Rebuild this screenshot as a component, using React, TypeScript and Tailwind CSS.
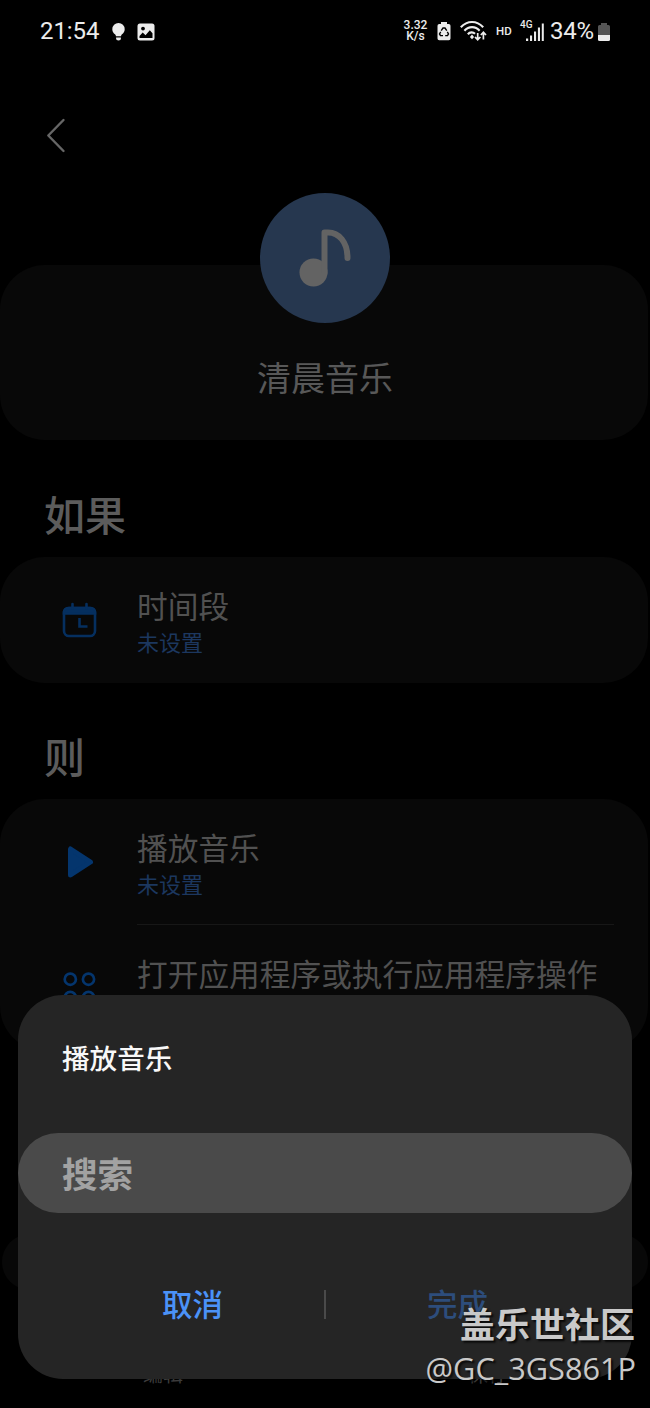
import type { ReactNode } from "react";

function StatusBar() {
  return (
    <div className="flex h-[62px] items-center justify-between pl-10 pr-[39px] font-['Roboto',sans-serif] text-[#ececec]">
      <div className="flex items-center">
        <span className="w-[60px] whitespace-nowrap text-[24px] leading-none tracking-[-0.1px]">21:54</span>
        <svg className="ml-3 mt-px h-[18px] w-[13px]" viewBox="0 0 13 18" fill="currentColor">
          <path d="M6.5 0A6.2 6.2 0 0 0 .3 6.2c0 2.4 1.3 3.9 2.7 5.1.6.6.8 1 .9 1.9h5.2c.1-.9.3-1.3.9-1.9 1.4-1.2 2.7-2.7 2.7-5.1A6.2 6.2 0 0 0 6.5 0z" />
          <path d="M4.1 14.4h4.8v1.2c0 1-1 2-2.4 2s-2.4-1-2.4-2z" />
        </svg>
        <svg className="ml-3 mt-px h-[18px] w-[18px]" viewBox="0 0 18 18">
          <rect x="0.5" y="0.5" width="17" height="17" rx="2.5" fill="currentColor" />
          <circle cx="6" cy="5.6" r="1.9" fill="#000" />
          <path d="M2.5 15v-2l3.2-3.4 2.8 2.6 4.3-5 2.7 3V15z" fill="#000" />
        </svg>
      </div>

      <div className="flex items-center">
        <div className="flex w-[25px] flex-col items-center text-[12px] font-medium leading-[11px]">
          <span>3.32</span>
          <span>K/s</span>
        </div>
        <svg className="ml-[9px] h-[20px] w-[14px]" viewBox="0 0 14 20">
          <path d="M4 1h6v2h1.7a1.8 1.8 0 0 1 1.8 1.8v12.7a1.8 1.8 0 0 1-1.8 1.8H2.3a1.8 1.8 0 0 1-1.8-1.8V4.8A1.8 1.8 0 0 1 2.3 3H4z" fill="currentColor" />
          <g fill="none" stroke="#000" strokeWidth="1.4">
            <path d="M4.2 9.6 6 7h2l1.8 2.6" />
            <path d="m10.3 10.8 1.2 2.1-1 1.7H8.2" />
            <path d="M6 14.6H3.500l-1-1.700 1.200-2.100" />
          </g>
        </svg>
        <svg className="ml-[9px] h-[22px] w-[27px]" viewBox="0 0 27 22" fill="none" stroke="currentColor" strokeWidth="2.1">
          <path d="M.8 7.2c6.4-7 16-7 22.4 0" />
          <path d="M4.4 10.8c4.4-4.9 11-4.9 15.2 0" />
          <path d="M7.8 14.2c2.2-2.4 5.2-2.4 7.2-.4" />
          <path d="m12 14.600 2.100 2.300-2.100 2.300-2.100-2.300z" fill="currentColor" stroke="none" />
          <path d="M17.7 13v6.500M15 17l2.700 2.700 2.700-2.700M23.400 19.500v-7M20.800 15l2.600-2.700L26 15" strokeWidth="1.7" />
        </svg>
        <span className="ml-[9px] mt-px w-[17px] text-[11.5px] font-medium leading-none">HD</span>
        <div className="relative ml-[7px] h-[22px] w-[25px]">
          <span className="absolute left-0 top-0 text-[10px] font-medium leading-[10px]">4G</span>
          <svg className="h-[22px] w-[25px]" viewBox="0 0 25 22" fill="currentColor">
            <path d="M6 18.500h2.200V21H6zM10 15.500h2.100V21H10zM14 11.500h2.100V21H14zM17.900 7.500H20V21h-2.100zM21.800 3.500h2V21h-2z" />
          </svg>
        </div>
        <span className="ml-[5px] w-[44px] whitespace-nowrap text-[24px] leading-none tracking-[-0.3px]">34%</span>
        <svg className="ml-[3px] mt-px h-[20px] w-[14px]" viewBox="0 0 14 20">
          <path d="M4 1h6v2h1.5A1.5 1.5 0 0 1 13 4.5V14H1V4.5A1.5 1.5 0 0 1 2.5 3H4z" fill="#555" />
          <path d="M1 13h12v4.5a1.5 1.5 0 0 1-1.5 1.5h-9A1.5 1.5 0 0 1 1 17.5z" fill="currentColor" />
        </svg>
      </div>
    </div>
  );
}

function CalendarIcon() {
  return (
    <svg className="h-[36px] w-[36px]" viewBox="0 0 36 36" fill="none" stroke="#052f5f" strokeWidth="2.6">
      <rect x="3" y="6" width="31" height="28" rx="5" />
      <path d="M3 11.5V10a4 4 0 0 1 4-4h23a4 4 0 0 1 4 4v1.5z" fill="#052f5f" />
      <path d="M11.5 2v4M25.5 2v4" strokeLinecap="round" />
      <path d="M18.5 16v8.500h8" />
    </svg>
  );
}

function PlayIcon() {
  return (
    <svg className="h-[36px] w-[36px]" viewBox="0 0 36 36">
      <path d="M9.5 5v26L29.5 18z" fill="#04356d" stroke="#04356d" strokeWidth="5" strokeLinejoin="round" />
    </svg>
  );
}

function AppsIcon() {
  return (
    <svg className="h-[36px] w-[36px]" viewBox="0 0 36 36" fill="none" stroke="#04356d" strokeWidth="2.7">
      <circle cx="9.3" cy="9.2" r="5.6" />
      <circle cx="27.5" cy="9.2" r="5.6" />
      <circle cx="9.3" cy="27.4" r="5.6" />
      <circle cx="27.5" cy="27.4" r="5.6" />
    </svg>
  );
}

function Row({ icon, title, subtitle }: { icon: ReactNode; title: string; subtitle?: string }) {
  return (
    <div className="flex h-[126px] pl-[61px]">
      <div className="w-[76px] pt-[45px]">{icon}</div>
      <div className="pt-[29px]">
        <p className="whitespace-nowrap text-[30.7px] leading-[38px] text-[#515151]">{title}</p>
        {subtitle && <p className="-mt-px text-[22px] leading-[36px] text-[#1c375f]">{subtitle}</p>}
      </div>
    </div>
  );
}

function Dialog() {
  return (
    <div className="absolute left-[18px] top-[995px] h-[384px] w-[614px] rounded-[45px] bg-[#252525]">
      <h2 className="pl-11 pt-[42px] text-[27.6px] font-medium leading-[40px] text-[#f8f8f8]">播放音乐</h2>
      <div className="mt-[56px] flex h-[80px] items-center rounded-[40px] bg-[#4a4a4a] pb-px pl-11">
        <span className="text-[35.6px] font-bold leading-none text-[#a2a2a2]">搜索</span>
      </div>
      <div className="mt-[68px] flex h-[46px] items-center text-[30.5px] font-medium leading-none">
        <button className="flex-1 pb-[2px] pl-[43px]">
          <span className="text-[#4b92f7]">取消</span>
        </button>
        <div className="h-[29px] w-[2px] bg-[#4a4a4a]" />
        <button className="flex-1 pb-[2px] pr-[43px]">
          <span className="text-[#2d4d7c]">完成</span>
        </button>
      </div>
    </div>
  );
}

function Watermark() {
  return (
    <div className="absolute right-[15px] top-[1301px] text-right text-[#c9c9c9] [text-shadow:2px_2px_2px_rgba(0,0,0,0.8)]">
      <p className="text-[35px] font-bold leading-[44px]">盖乐世社区</p>
      <p className="-mr-px font-['Open_Sans',sans-serif] text-[30.7px] leading-[46px]">@GC_3GS861P</p>
    </div>
  );
}

export default function App() {
  return (
    <div className="relative h-[1408px] w-[650px] overflow-hidden bg-black font-['Noto_Sans_CJK_SC',sans-serif]">
      <StatusBar />

      <div className="h-[203px] pl-[46px] pt-[56px]">
        <svg className="h-[35px] w-[20px]" viewBox="0 0 20 35" fill="none" stroke="#666" strokeWidth="2.4" strokeLinecap="round" strokeLinejoin="round">
          <path d="M17.5 2 2.300 17.500 17.500 33" />
        </svg>
      </div>

      <section className="mr-[2px] flex h-[175px] flex-col items-center rounded-[45px] bg-[#080808]">
        <div className="-mt-[72px] ml-[2px] h-[130px] w-[130px] shrink-0 rounded-full bg-[#26374f]">
          <svg className="h-[130px] w-[130px]" viewBox="0 0 130 130">
            <circle cx="53.5" cy="79.5" r="14" fill="#636363" />
            <path d="M64.5 80V39.500h3.500C79 39.500 87.500 49 87.500 65" fill="none" stroke="#636363" strokeWidth="6" strokeLinecap="round" strokeLinejoin="round" />
          </svg>
        </div>
        <h1 className="ml-[2px] mt-[29px] text-[34px] leading-[50px] text-[#585858]">清晨音乐</h1>
      </section>

      <h2 className="h-[117px] pl-11 pt-[43px] text-[41px] font-medium leading-[60px] text-[#5c5c5c]">如果</h2>
      <section className="mr-[2px] rounded-[45px] bg-[#080808]">
        <Row icon={<CalendarIcon />} title="时间段" subtitle="未设置" />
      </section>

      <h2 className="h-[116px] pl-11 pt-[42px] text-[41px] font-medium leading-[60px] text-[#5c5c5c]">则</h2>
      <section className="mr-[2px] rounded-[45px] bg-[#080808]">
        <Row icon={<PlayIcon />} title="播放音乐" subtitle="未设置" />
        <div className="-mt-px ml-[137px] mr-[34px] h-px bg-[#171717]" />
        <Row icon={<AppsIcon />} title="打开应用程序或执行应用程序操作" />
      </section>

      <div className="mx-[2px] mt-[183px] h-[56px] rounded-full bg-[#080808]" />
      <div className="mt-[69px] flex pl-[143px] text-[20px] leading-[30px] text-[#3c3c3c]">
        <span className="w-[325px]">编辑</span>
        <span>保存</span>
      </div>

      <Dialog />
      <Watermark />
    </div>
  );
}
